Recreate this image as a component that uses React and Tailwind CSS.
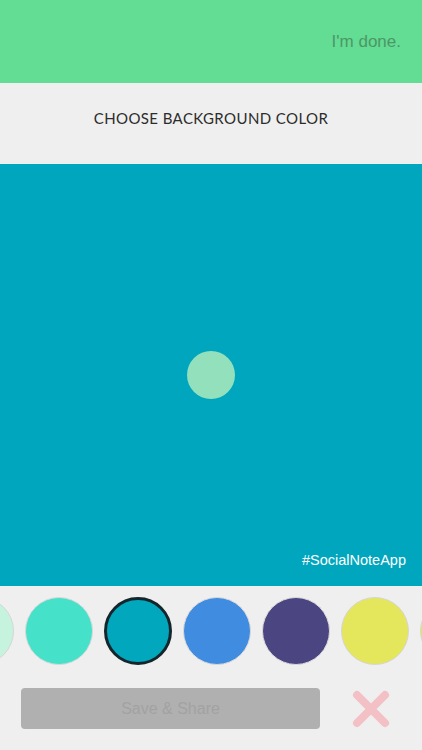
import React from 'react';

const swatches = [
  { color: 'bg-[#c6f3de]', edge: 'border-[#d6d6d6]' },
  { color: 'bg-[#45e1c9]', edge: 'border-[#d9d9d9]' },
  { color: 'bg-[#00a7bd]', edge: 'border-[#14262c]', selected: true },
  { color: 'bg-[#3f8ce0]', edge: 'border-[#d9d9d9]' },
  { color: 'bg-[#4b4681]', edge: 'border-[#d9d9d9]' },
  { color: 'bg-[#e4e65c]', edge: 'border-[#d6d6d6]' },
  { color: 'bg-[#e4e65c]', edge: 'border-[#d6d6d6]' },
];

const App = () => {
  return (
    <div className="w-[422px] h-[750px] overflow-hidden flex flex-col bg-[#efefef]" style={{ fontFamily: 'Lato, "Open Sans", sans-serif' }}>
      {/* Header */}
      <div className="h-[83px] shrink-0 bg-[#63dc94] flex items-center justify-end pr-[21px]">
        <span className="text-[17px] text-[#4b9866]" style={{ fontFamily: '"Liberation Sans", sans-serif' }}>I'm done.</span>
      </div>

      {/* Title */}
      <div className="h-[81px] shrink-0 flex items-center justify-center">
        <span className="text-[15px] tracking-[0.4px] text-[#2c2c2c] mt-[-10px]">CHOOSE BACKGROUND COLOR</span>
      </div>

      {/* Canvas */}
      <div className="relative h-[422px] shrink-0 bg-[#00a6bd] flex items-center justify-center">
        <div className="w-[48px] h-[48px] rounded-full bg-[#93e1bc]" />
        <span className="absolute right-[16px] bottom-[14px] text-[14.5px] text-white" style={{ fontFamily: '"Liberation Sans", sans-serif' }}>#SocialNoteApp</span>
      </div>

      {/* Swatches */}
      <div className="flex items-center gap-[11px] ml-[-54px] pt-[11px] shrink-0">
        {swatches.map((s, i) => (
          <div
            key={i}
            className={`shrink-0 w-[68px] h-[68px] rounded-full ${s.color} ${s.selected ? 'border-[3px] ' + s.edge : 'border ' + s.edge}`}
          />
        ))}
      </div>

      {/* Bottom actions */}
      <div className="flex items-center pl-[21px] pr-[32px] mt-[23px]">
        <button className="w-[299px] h-[41px] rounded-[4px] bg-[#b0b0b0] text-[16px] text-[#a2a2a2]" style={{ fontFamily: '"Liberation Sans", sans-serif' }}>
          Save &amp; Share
        </button>
        <div className="ml-auto">
          <svg width="38" height="38" viewBox="0 0 38 38">
            <path d="M5 5 L33 33 M33 5 L5 33" stroke="#f2c0c5" strokeWidth="8" strokeLinecap="round" />
          </svg>
        </div>
      </div>
    </div>
  );
};

export default App;
